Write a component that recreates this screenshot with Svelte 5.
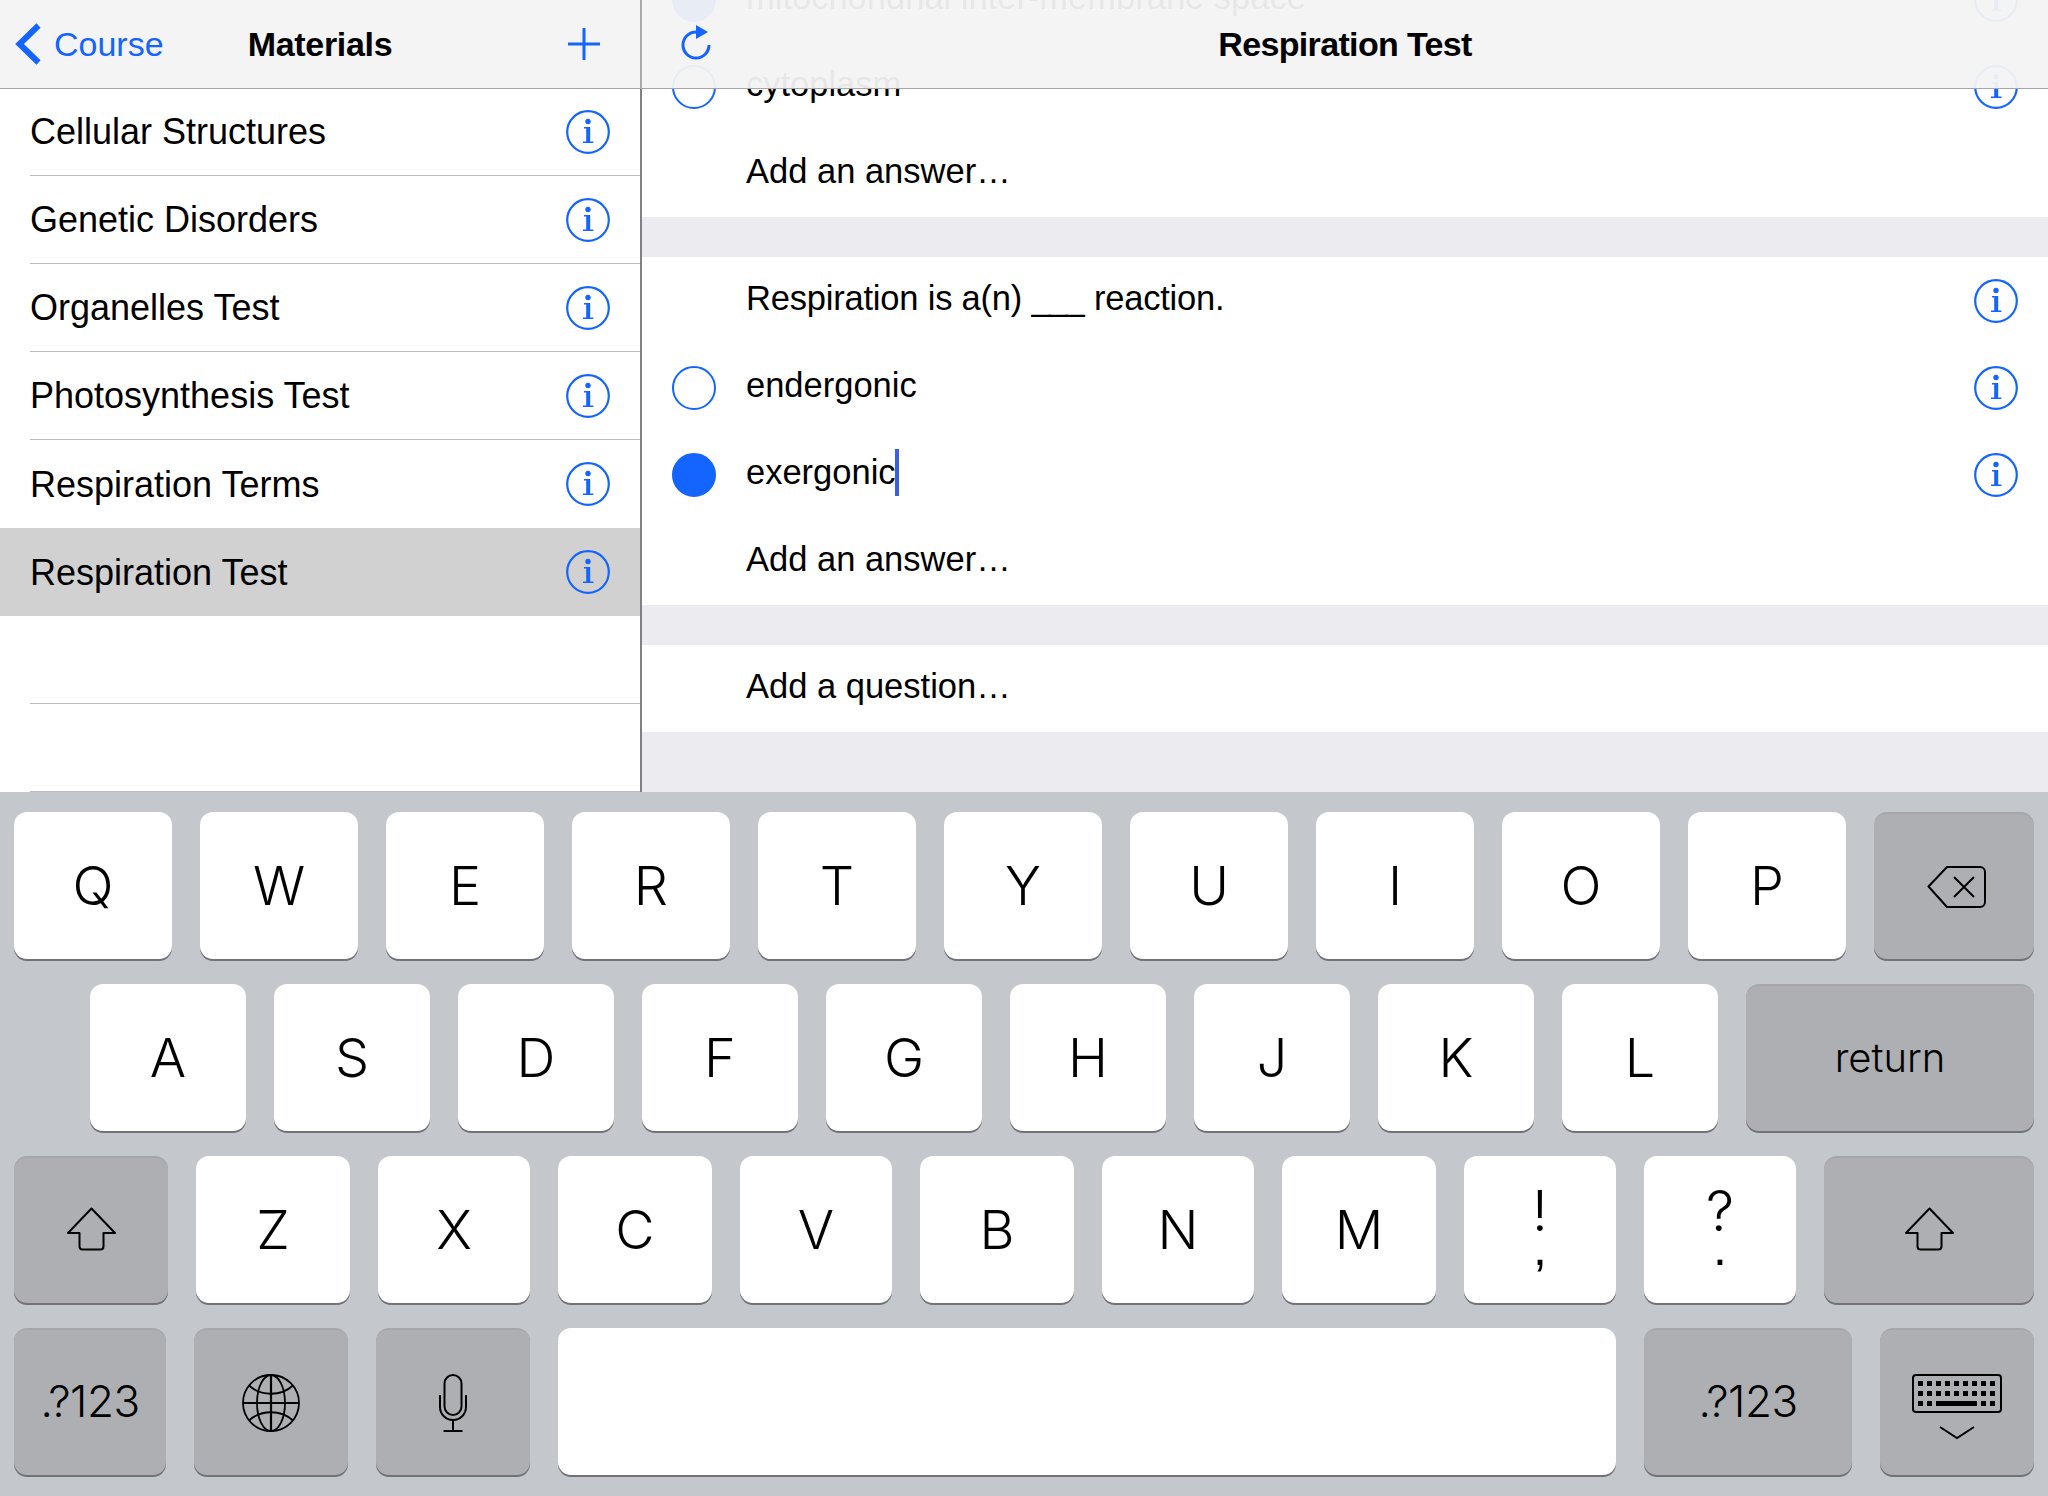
<script lang="ts">
	const materials = [
		"Cellular Structures",
		"Genetic Disorders",
		"Organelles Test",
		"Photosynthesis Test",
		"Respiration Terms",
		"Respiration Test",
	];

	const row1 = ["Q", "W", "E", "R", "T", "Y", "U", "I", "O", "P"];
	const row2 = ["A", "S", "D", "F", "G", "H", "J", "K", "L"];
	const row3 = [
		{ t: "Z", w: 154 },
		{ t: "X", w: 152 },
		{ t: "C", w: 154 },
		{ t: "V", w: 152 },
		{ t: "B", w: 154 },
		{ t: "N", w: 152 },
		{ t: "M", w: 154 },
	];
</script>

{#snippet info()}
	<svg class="info" width="44" height="44" viewBox="0 0 44 44">
		<circle cx="22" cy="22" r="20.8" fill="none" stroke="#1464ff" stroke-width="2.2" />
		<circle cx="22" cy="11.5" r="2.7" fill="#1464ff" />
		<path d="M18 17h6.2v14.4h3.2V33H17v-1.6h3.2V18.6H18z" fill="#1464ff" />
	</svg>
{/snippet}

{#snippet shift()}
	<svg class="lift" width="50" height="44" viewBox="0 0 50 44" fill="none" stroke="#000" stroke-width="2" stroke-linejoin="round">
		<path d="M25.500 1.500 49 26H37.500v13.500a3 3 0 0 1-3 3h-18a3 3 0 0 1-3-3V26H2z" />
	</svg>
{/snippet}

<div class="screen">
	<div class="top">
		<section class="left">
			<header class="nav">
				<div class="back">
					<svg width="26" height="42" viewBox="0 0 26 42" fill="none" stroke="#1464ff" stroke-width="6">
						<path d="M23.500 2.500 4.500 21l19 18.500" />
					</svg>
					<span>Course</span>
				</div>
				<div class="title">Materials</div>
				<div class="plus">
					<svg width="32" height="32" viewBox="0 0 32 32" fill="none" stroke="#1464ff" stroke-width="3">
						<path d="M16 0v32M0 16h32" />
					</svg>
				</div>
			</header>
			<ul class="list">
				{#each materials as name, i}
					<li
						class="material"
						class:selected={i === materials.length - 1}
						class:noline={i === materials.length - 2}
					>
						<span>{name}</span>
						{@render info()}
					</li>
				{/each}
				<li class="material"></li>
				<li class="material"></li>
			</ul>
		</section>

		<section class="right">
			<div class="content">
				<div class="row">
					<span class="radio on"></span>
					<span class="label">mitochondrial inter-membrane space</span>
					{@render info()}
				</div>
				<div class="row">
					<span class="radio"></span>
					<span class="label">cytoplasm</span>
					{@render info()}
				</div>
				<div class="row">
					<span class="blank"></span>
					<span class="label">Add an answer…</span>
				</div>
				<div class="gap"></div>
				<div class="row">
					<span class="blank"></span>
					<span class="label question">Respiration is a(n) <span class="fill">___</span> reaction.</span>
					{@render info()}
				</div>
				<div class="row">
					<span class="radio"></span>
					<span class="label">endergonic</span>
					{@render info()}
				</div>
				<div class="row">
					<span class="radio on"></span>
					<span class="label editing">exergonic<i class="caret"></i></span>
					{@render info()}
				</div>
				<div class="row">
					<span class="blank"></span>
					<span class="label">Add an answer…</span>
				</div>
				<div class="gap"></div>
				<div class="row">
					<span class="blank"></span>
					<span class="label">Add a question…</span>
				</div>
			</div>
			<header class="nav over">
				<div class="reload">
					<svg width="32" height="36" viewBox="0 0 32 36" fill="none">
						<path d="M16 8A13 13 0 1 0 29 21" stroke="#1464ff" stroke-width="3" />
						<path d="M16 1l12 7-12 7z" fill="#1464ff" />
					</svg>
				</div>
				<div class="title tight">Respiration Test</div>
				<div></div>
			</header>
		</section>
	</div>

	<div class="keyboard">
		<div class="keys">
			{#each row1 as k}
				<button class="key letter w158">{k}</button>
			{/each}
			<button class="key dark w160" aria-label="delete">
				<svg class="nudge" width="60" height="44" viewBox="0 0 60 44" fill="none" stroke="#000" stroke-width="2" stroke-linejoin="round">
					<path d="M1.500 21.500 20 2h33a5 5 0 0 1 5 5v30a5 5 0 0 1-5 5H20z" />
					<path d="M27 12l20 20M47 12 27 32" />
				</svg>
			</button>
		</div>
		<div class="keys second">
			{#each row2 as k}
				<button class="key letter w156">{k}</button>
			{/each}
			<button class="key dark word return">return</button>
		</div>
		<div class="keys">
			<button class="key dark" style="width: 154px" aria-label="shift">{@render shift()}</button>
			{#each row3 as k}
				<button class="key letter" style="width: {k.w}px">{k.t}</button>
			{/each}
			<button class="key punct" style="width: 152px"><span>!</span><span class="low">,</span></button>
			<button class="key punct" style="width: 152px"><span>?</span><span class="low">.</span></button>
			<button class="key dark" style="width: 210px" aria-label="shift">{@render shift()}</button>
		</div>
		<div class="keys">
			<button class="key dark word num" style="width: 152px">.?123</button>
			<button class="key dark" style="width: 154px" aria-label="globe">
				<svg width="60" height="60" viewBox="0 0 60 60" fill="none" stroke="#000" stroke-width="1.800">
					<circle cx="30" cy="30" r="28" />
					<ellipse cx="30" cy="30" rx="14" ry="28" />
					<path d="M30 2v56M2 30h56" stroke-width="2.200" />
					<path d="M8 12.500c12 11 32 11 44 0M8 47.500c12-11 32-11 44 0" />
				</svg>
			</button>
			<button class="key dark" style="width: 154px" aria-label="dictation">
				<svg width="30" height="60" viewBox="0 0 30 60" fill="none" stroke="#000" stroke-width="2">
					<rect x="6.500" y="2" width="17" height="40" rx="8.500" />
					<path d="M2 22v12a13 13 0 0 0 26 0V22M15 47v11M5.500 58h19" />
				</svg>
			</button>
			<button class="key letter" style="width: 1058px" aria-label="space"></button>
			<button class="key dark word num" style="width: 208px">.?123</button>
			<button class="key dark" style="width: 154px" aria-label="hide keyboard">
				<svg width="92" height="74" viewBox="0 0 92 74" fill="none">
					<rect x="2" y="9" width="88" height="37" rx="3" stroke="#000" stroke-width="2" />
					{#each [0, 1] as r}
						{#each [0, 1, 2, 3, 4, 5, 6, 7, 8] as c}
							<rect x={7 + c * 9} y={15 + r * 10} width="5" height="5" fill="#000" />
						{/each}
					{/each}
					<rect x="7" y="35" width="5" height="5" fill="#000" />
					<rect x="16" y="35" width="5" height="5" fill="#000" />
					<rect x="25" y="35" width="41" height="5" fill="#000" />
					<rect x="70" y="35" width="5" height="5" fill="#000" />
					<rect x="79" y="35" width="5" height="5" fill="#000" />
					<path d="M29 61l17 11 17-11" stroke="#000" stroke-width="2" />
				</svg>
			</button>
		</div>
	</div>
</div>

<style>
	:global(body) {
		margin: 0;
		background: #fff;
	}

	.screen {
		width: 2048px;
		height: 1496px;
		display: flex;
		flex-direction: column;
		overflow: hidden;
		font-family: "Liberation Sans", Arial, sans-serif;
		color: #000;
	}

	.top {
		height: 792px;
		display: flex;
		overflow: hidden;
	}

	.left {
		width: 640px;
		border-right: 2px solid #808085;
		flex: none;
		display: flex;
		flex-direction: column;
	}

	.nav {
		height: 88px;
		flex: none;
		display: grid;
		grid-template-columns: 1fr auto 1fr;
		align-items: center;
		background: rgba(243, 243, 243, 0.95);
		box-shadow: 0 1px 0 #a7a7aa;
		position: relative;
		z-index: 1;
	}

	.nav.over {
		position: absolute;
		top: 0;
		left: -2px;
		right: 0;
		border-left: 2px solid #a9a9a9;
	}

	.title {
		font-size: 34px;
		font-weight: 700;
		letter-spacing: -0.3px;
	}

	.title.tight {
		letter-spacing: -0.65px;
	}

	.back {
		display: flex;
		align-items: center;
		padding-left: 15px;
		color: #1464ff;
		font-size: 34px;
		gap: 13px;
	}

	.plus {
		display: flex;
		justify-content: flex-end;
		padding-right: 40px;
	}

	.reload {
		display: flex;
		padding-left: 38px;
		padding-bottom: 4px;
	}

	.list {
		list-style: none;
		margin: 0;
		padding: 0;
	}

	.material {
		height: 88px;
		box-sizing: border-box;
		display: flex;
		align-items: center;
		justify-content: space-between;
		padding-right: 30px;
		margin-left: 30px;
		border-bottom: 1px solid #bcbcc0;
		font-size: 36px;
	}

	.material span {
		padding-top: 1px;
	}

	.material.noline {
		border-bottom: none;
	}

	.material.selected {
		margin-left: 0;
		padding-left: 30px;
		background: #d1d1d1;
		border-bottom: none;
	}

	.info {
		flex: none;
		display: block;
	}

	.right {
		flex: 1;
		position: relative;
		min-width: 0;
		background: #ebebf0;
	}

	.content {
		margin-top: -44px;
	}

	.row {
		height: 87px;
		display: flex;
		align-items: center;
		padding: 0 30px;
		gap: 30px;
		background: #fff;
		font-size: 34.5px;
	}

	.gap {
		height: 40px;
	}

	.radio,
	.blank {
		width: 44px;
		height: 44px;
		flex: none;
		box-sizing: border-box;
		border-radius: 50%;
	}

	.radio {
		border: 2.5px solid #1464ff;
	}

	.radio.on {
		background: #1464ff;
	}

	.label {
		flex: 1;
		white-space: pre;
		padding-bottom: 5px;
	}

	.question {
		letter-spacing: -0.2px;
	}

	.fill {
		letter-spacing: -2.2px;
		margin-right: 2px;
	}

	.label.editing {
		display: flex;
		align-items: center;
	}

	.caret {
		width: 4px;
		height: 47px;
		background: #3a5ce8;
		margin-left: -1px;
	}

	.keyboard {
		flex: 1;
		background: #c4c8cc;
		padding: 20px 14px 0;
		display: flex;
		flex-direction: column;
		gap: 23px;
	}

	.keys {
		display: flex;
		gap: 28px;
	}

	.keys.second {
		padding-left: 76px;
	}

	.key {
		height: 147px;
		margin: 0 0 2px;
		padding: 0;
		border: none;
		border-radius: 13px;
		box-shadow: 0 2px 0 #707276;
		background: #fff;
		display: flex;
		align-items: center;
		justify-content: center;
		color: #000;
		font-family: Inter, "Liberation Sans", sans-serif;
		font-weight: 300;
		flex: none;
	}

	.letter {
		font-size: 54px;
	}

	.dark {
		background: #adafb3;
		border-top: 2px solid #a5a7ab;
	}

	.word {
		font-size: 40px;
		padding-bottom: 2px;
	}

	.word.num {
		font-size: 44px;
		letter-spacing: -0.5px;
		padding-bottom: 4px;
	}

	.w158 {
		width: 158px;
	}

	.w160 {
		width: 160px;
	}

	.w156 {
		width: 156px;
	}

	.return {
		width: 288px;
	}

	.punct {
		flex-direction: column;
		font-size: 56px;
		line-height: 41px;
	}

	.low {
		font-family: "Liberation Sans", Arial, sans-serif;
		font-weight: 400;
		font-size: 50px;
		margin-top: -4px;
	}

	.lift {
		margin-bottom: 3px;
	}

	.nudge {
		transform: translateX(3px);
	}
</style>
